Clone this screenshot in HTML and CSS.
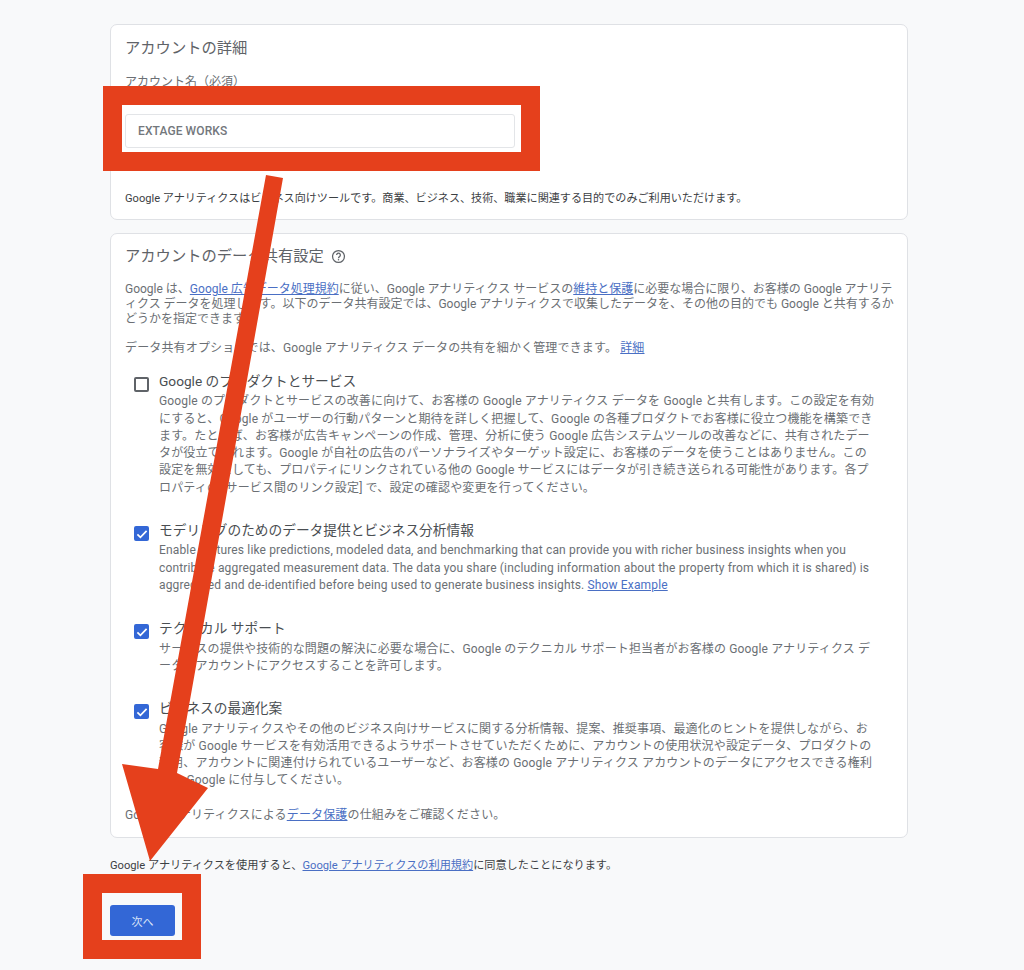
FILE: index.html
```html
<!DOCTYPE html>
<html lang="ja">
<head>
<meta charset="utf-8">
<title>アカウントの作成</title>
<link rel="stylesheet" href="styles.css">
</head>
<body>
<main class="page">
  <section class="card card-account">
    <h2 class="card-title">アカウントの詳細</h2>
    <div class="field-label">アカウント名（必須）</div>
    <div class="input">EXTAGE WORKS</div>
    <p class="note">Google アナリティクスはビジネス向けツールです。商業、ビジネス、技術、職業に関連する目的でのみご利用いただけます。</p>
  </section>

  <section class="card card-sharing">
    <h2 class="card-title">アカウントのデータ共有設定
      <svg class="help" viewBox="0 0 24 24" width="15" height="15"><circle cx="12" cy="12" r="9.5" fill="none" stroke="#5f6368" stroke-width="2"/><path d="M9 9.6a3 3 0 1 1 4.6 2.6c-1 .6-1.6 1.2-1.6 2.4" fill="none" stroke="#5f6368" stroke-width="2"/><circle cx="12" cy="17.4" r="1.2" fill="#5f6368"/></svg>
    </h2>
    <p class="intro">Google は、<a href="#">Google 広告データ処理規約</a>に従い、Google アナリティクス サービスの<a href="#">維持と保護</a>に必要な場合に限り、お客様の Google アナリテ<br>ィクス データを処理します。以下のデータ共有設定では、Google アナリティクスで収集したデータを、その他の目的でも Google と共有するか<br>どうかを指定できます。</p>
    <p class="intro intro-second">データ共有オプションでは、Google アナリティクス データの共有を細かく管理できます。 <a href="#">詳細</a></p>

    <div class="option option-products">
      <span class="check"></span>
      <div class="option-body">
        <h3 class="option-title">Google のプロダクトとサービス</h3>
        <p class="option-text">Google のプロダクトとサービスの改善に向けて、お客様の Google アナリティクス データを Google と共有します。この設定を有効<br>にすると、Google がユーザーの行動パターンと期待を詳しく把握して、Google の各種プロダクトでお客様に役立つ機能を構築でき<br>ます。たとえば、お客様が広告キャンペーンの作成、管理、分析に使う Google 広告システムツールの改善などに、共有されたデー<br>タが役立てられます。Google が自社の広告のパーソナライズやターゲット設定に、お客様のデータを使うことはありません。この<br>設定を無効にしても、プロパティにリンクされている他の Google サービスにはデータが引き続き送られる可能性があります。各プ<br>ロパティの [サービス間のリンク設定] で、設定の確認や変更を行ってください。</p>
      </div>
    </div>

    <div class="option option-modeling">
      <span class="check checked"><svg viewBox="0 0 16 16" width="16" height="16"><path d="M3.4 8.4l3 3 6.2-6.6" fill="none" stroke="#fff" stroke-width="1.7"/></svg></span>
      <div class="option-body">
        <h3 class="option-title">モデリングのためのデータ提供とビジネス分析情報</h3>
        <p class="option-text">Enable features like predictions, modeled data, and benchmarking that can provide you with richer business insights when you<br>contribute aggregated measurement data. The data you share (including information about the property from which it is shared) is<br>aggregated and de-identified before being used to generate business insights. <a href="#">Show Example</a></p>
      </div>
    </div>

    <div class="option option-support">
      <span class="check checked"><svg viewBox="0 0 16 16" width="16" height="16"><path d="M3.4 8.4l3 3 6.2-6.6" fill="none" stroke="#fff" stroke-width="1.7"/></svg></span>
      <div class="option-body">
        <h3 class="option-title">テクニカル サポート</h3>
        <p class="option-text">サービスの提供や技術的な問題の解決に必要な場合に、Google のテクニカル サポート担当者がお客様の Google アナリティクス デ<br>ータやアカウントにアクセスすることを許可します。</p>
      </div>
    </div>

    <div class="option option-business">
      <span class="check checked"><svg viewBox="0 0 16 16" width="16" height="16"><path d="M3.4 8.4l3 3 6.2-6.6" fill="none" stroke="#fff" stroke-width="1.7"/></svg></span>
      <div class="option-body">
        <h3 class="option-title">ビジネスの最適化案</h3>
        <p class="option-text">Google アナリティクスやその他のビジネス向けサービスに関する分析情報、提案、推奨事項、最適化のヒントを提供しながら、お<br>客様が Google サービスを有効活用できるようサポートさせていただくために、アカウントの使用状況や設定データ、プロダクトの<br>利用、アカウントに関連付けられているユーザーなど、お客様の Google アナリティクス アカウントのデータにアクセスできる権利<br>限を Google に付与してください。</p>
      </div>
    </div>

    <p class="protect">Google アナリティクスによる<a href="#">データ保護</a>の仕組みをご確認ください。</p>
  </section>

  <p class="legal">Google アナリティクスを使用すると、<a href="#">Google アナリティクスの利用規約</a>に同意したことになります。</p>
  <button class="next" type="button">次へ</button>
</main>

<svg class="annotation" viewBox="0 0 1024 970" width="1024" height="970">
  <rect x="112.5" y="95.5" width="418" height="66" fill="none" stroke="#e5401c" stroke-width="19"/>
  <rect x="92.5" y="883.5" width="99" height="66" fill="none" stroke="#e5401c" stroke-width="19"/>
  <path d="M266 175 283 178 177 773 208 788 150 861 122 764 158 769Z" fill="#e5401c"/>
</svg>
</body>
</html>
```
FILE: styles.css
```css
* { box-sizing: border-box; }
html, body { margin: 0; padding: 0; }
body {
  width: 1024px;
  height: 970px;
  overflow: hidden;
  position: relative;
  background: #f8f9fa;
  color: #6b6f74;
  font-family: "Roboto", "Noto Sans CJK JP", sans-serif;
  font-size: 12px;
}
.page {
  width: 798px;
  margin-left: 110px;
  padding-top: 24px;
}
.card {
  background: #fff;
  border: 1px solid #dfe1e5;
  border-radius: 7px;
  padding: 0 14px;
}
.card-account { height: 196px; padding-top: 13px; }
.card-sharing { height: 605px; margin-top: 13px; padding-top: 12px; }
.card-title {
  margin: 0;
  font-size: 15.3px;
  font-weight: 400;
  line-height: 20px;
  color: #5f6368;
  display: flex;
  align-items: center;
}
.help { margin-left: 7px; }
.field-label { margin-top: 16px; font-size: 12px; line-height: 16px; }
.input {
  margin-top: 24px;
  height: 34px;
  width: 390px;
  border: 1px solid #e3e5e8;
  border-radius: 3px;
  padding-left: 12px;
  line-height: 32px;
  font-size: 12px;
  letter-spacing: 0.1px;
  font-weight: 500;
  color: #73777c;
}
.note {
  margin: 43px 0 0;
  font-size: 11.1px;
  line-height: 16px;
  color: #3c4043;
  white-space: nowrap;
}
.intro {
  margin: 16px 0 0;
  line-height: 15.2px;
  white-space: nowrap;
}
.intro-second { margin-top: 13px; letter-spacing: 0.15px; }
a { color: #4a6fc4; text-decoration: underline; }
.option { display: flex; padding-left: 9px; }
.option-products { margin-top: 17px; }
.option-modeling { margin-top: 25px; }
.option-support { margin-top: 26px; }
.option-business { margin-top: 25px; }
.check {
  flex: none;
  width: 15px;
  height: 15px;
  margin-top: 4px;
  margin-right: 10px;
  border: 2px solid #5f6368;
  border-radius: 2px;
  position: relative;
}
.check.checked { background: #3367d6; border-color: #3367d6; }
.check svg { position: absolute; left: -2px; top: -2px; }
.option-title {
  margin: 0;
  font-size: 13.7px;
  font-weight: 400;
  line-height: 17px;
  color: #4a4e52;
}
.option-text {
  margin: 3.5px 0 0;
  line-height: 17.25px;
  letter-spacing: 0.15px;
  white-space: nowrap;
}
.protect { margin: 17px 0 0; line-height: 16px; letter-spacing: 0.15px; }
.legal {
  margin: 20px 0 0;
  font-size: 11.17px;
  line-height: 16px;
  color: #3c4043;
  white-space: nowrap;
}
.next {
  display: block;
  margin-top: 31px;
  width: 65px;
  height: 31px;
  border: 0;
  border-radius: 3px;
  background: #3367d6;
  color: #dbe4f8;
  font-family: inherit;
  font-size: 11px;
  padding: 0;
}
.annotation { position: absolute; left: 0; top: 0; pointer-events: none; }
```
